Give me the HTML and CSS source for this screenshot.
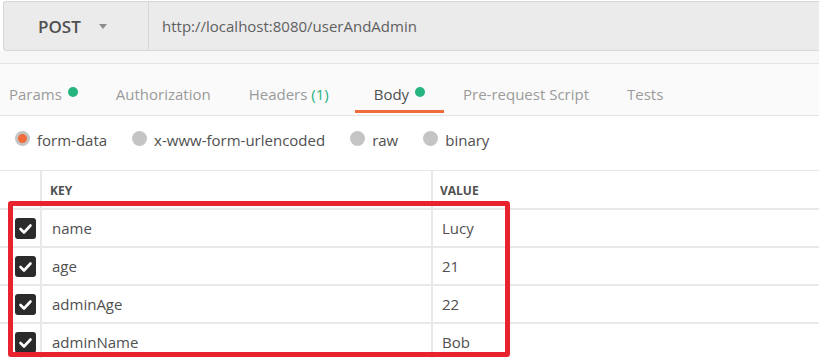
FILE: index.html
```html
<!DOCTYPE html>
<html>
<head>
<meta charset="utf-8">
<link rel="stylesheet" href="styles.css">
</head>
<body>
<div class="page">
  <div class="urlbar">
    <div class="method">
      <span class="method-name">POST</span>
      <span class="caret"></span>
    </div>
    <div class="url">http://localhost:8080/userAndAdmin</div>
  </div>
  <div class="band"></div>
  <div class="tabs">
    <div class="tab first">Params <span class="dot"></span></div>
    <div class="tab">Authorization</div>
    <div class="tab headers">Headers <span class="count">(1)</span></div>
    <div class="tab active">Body <span class="dot"></span></div>
    <div class="tab">Pre-request Script</div>
    <div class="tab">Tests</div>
  </div>
  <div class="radios">
    <div class="radio"><span class="circle selected"></span>form-data</div>
    <div class="radio"><span class="circle"></span>x-www-form-urlencoded</div>
    <div class="radio"><span class="circle"></span>raw</div>
    <div class="radio"><span class="circle"></span>binary</div>
  </div>
  <div class="table">
    <div class="row head">
      <div class="cell check"></div>
      <div class="cell key">KEY</div>
      <div class="cell value">VALUE</div>
    </div>
    <div class="row">
      <div class="cell check"><svg class="cb" width="21" height="21" viewBox="0 0 21 21"><rect x="0" y="0" width="21" height="21" rx="3" fill="#2b2b2b"/><polyline points="5.5,11 9,14.5 15.5,7.5" fill="none" stroke="#fff" stroke-width="2.6" stroke-linecap="round" stroke-linejoin="round"/></svg></div>
      <div class="cell key">name</div>
      <div class="cell value">Lucy</div>
    </div>
    <div class="row">
      <div class="cell check"><svg class="cb" width="21" height="21" viewBox="0 0 21 21"><rect x="0" y="0" width="21" height="21" rx="3" fill="#2b2b2b"/><polyline points="5.5,11 9,14.5 15.5,7.5" fill="none" stroke="#fff" stroke-width="2.6" stroke-linecap="round" stroke-linejoin="round"/></svg></div>
      <div class="cell key">age</div>
      <div class="cell value">21</div>
    </div>
    <div class="row">
      <div class="cell check"><svg class="cb" width="21" height="21" viewBox="0 0 21 21"><rect x="0" y="0" width="21" height="21" rx="3" fill="#2b2b2b"/><polyline points="5.5,11 9,14.5 15.5,7.5" fill="none" stroke="#fff" stroke-width="2.6" stroke-linecap="round" stroke-linejoin="round"/></svg></div>
      <div class="cell key">adminAge</div>
      <div class="cell value">22</div>
    </div>
    <div class="row">
      <div class="cell check"><svg class="cb" width="21" height="21" viewBox="0 0 21 21"><rect x="0" y="0" width="21" height="21" rx="3" fill="#2b2b2b"/><polyline points="5.5,11 9,14.5 15.5,7.5" fill="none" stroke="#fff" stroke-width="2.6" stroke-linecap="round" stroke-linejoin="round"/></svg></div>
      <div class="cell key">adminName</div>
      <div class="cell value">Bob</div>
    </div>
  </div>
  <div class="highlight"></div>
</div>
</body>
</html>
```

FILE: styles.css
```css
* { box-sizing: border-box; }
html, body {
  margin: 0;
  padding: 0;
  background: #ffffff;
  overflow: hidden;
}
body {
  font-family: "Open Sans", "Liberation Sans", sans-serif;
  color: #505050;
  width: 819px;
  height: 358px;
}
.page {
  position: relative;
  width: 819px;
  height: 358px;
  overflow: hidden;
  background: #ffffff;
}
.urlbar {
  display: flex;
  height: 50px;
  margin: 1px 0 0 3px;
  background: #ebebeb;
  border: 1px solid #d6d6d6;
  border-right: none;
  border-radius: 3px 0 0 3px;
}
.method {
  width: 145px;
  display: flex;
  align-items: center;
  padding-left: 34px;
  border-right: 1px solid #d6d6d6;
}
.method-name {
  font-size: 17px;
  font-weight: 600;
  color: #505050;
}
.caret {
  margin-left: 18px;
  margin-top: 1px;
  width: 0;
  height: 0;
  border-left: 4.5px solid transparent;
  border-right: 4.5px solid transparent;
  border-top: 5px solid #8c8c8c;
}
.url {
  display: flex;
  align-items: center;
  padding-left: 13px;
  font-size: 15px;
  color: #606060;
}
.band {
  height: 13px;
  background: #f7f7f7;
  border-bottom: 1px solid #e4e4e4;
}
.tabs {
  display: flex;
  height: 52px;
  background: #fafafa;
  border-bottom: 1px solid #e4e4e4;
  padding-left: 9px;
}
.tab {
  display: flex;
  align-items: center;
  padding: 14px 19px 0 19px;
  font-size: 15px;
  color: #9a9a9a;
  border-bottom: 3px solid transparent;
  margin-bottom: 2px;
  white-space: pre;
}
.tab.first { padding-left: 0; }
.tab.headers { margin-right: 7px; }
.tab.active {
  color: #505050;
  border-bottom-color: #f26b3a;
}
.dot {
  display: inline-block;
  width: 10px;
  height: 10px;
  border-radius: 50%;
  background: #26b47f;
  margin-left: 2px;
  margin-top: -4px;
}
.count { color: #26b47f; }
.radios {
  display: flex;
  align-items: center;
  height: 54px;
  padding: 0 0 6px 15px;
}
.radio {
  display: flex;
  align-items: center;
  font-size: 15px;
  color: #505050;
  margin-right: 25px;
}
.circle {
  display: inline-block;
  width: 15px;
  height: 15px;
  border-radius: 50%;
  background: #c4c4c4;
  margin-right: 7px;
  margin-top: -3px;
  position: relative;
}
.circle.selected {
  background: #f26b3a;
  border: 3px solid #c4c4c4;
}
.table {
  border-top: 1px solid #e6e6e6;
}
.row {
  display: grid;
  grid-template-columns: 42px 391px 1fr;
  height: 38px;
  border-bottom: 2px solid #e8e8e8;
}
.row.head {
  height: 39px;
}
.cell {
  display: flex;
  align-items: center;
  font-size: 15px;
  color: #505050;
}
.cell.check {
  border-right: 2px solid #e8e8e8;
  padding-left: 15px;
}
.cell.key {
  border-right: 2px solid #e8e8e8;
  padding-left: 10px;
}
.cell.value {
  padding-left: 9px;
}
.head .cell {
  font-size: 12px;
  font-weight: 700;
  color: #505050;
  padding-top: 1px;
}
.head .cell.key { padding-left: 8px; }
.head .cell.value { padding-left: 7px; }
.cb { display: block; }
.highlight {
  position: absolute;
  left: 8px;
  top: 201px;
  width: 502px;
  height: 156px;
  border: 5px solid #e8232d;
  border-radius: 3px;
}
```
